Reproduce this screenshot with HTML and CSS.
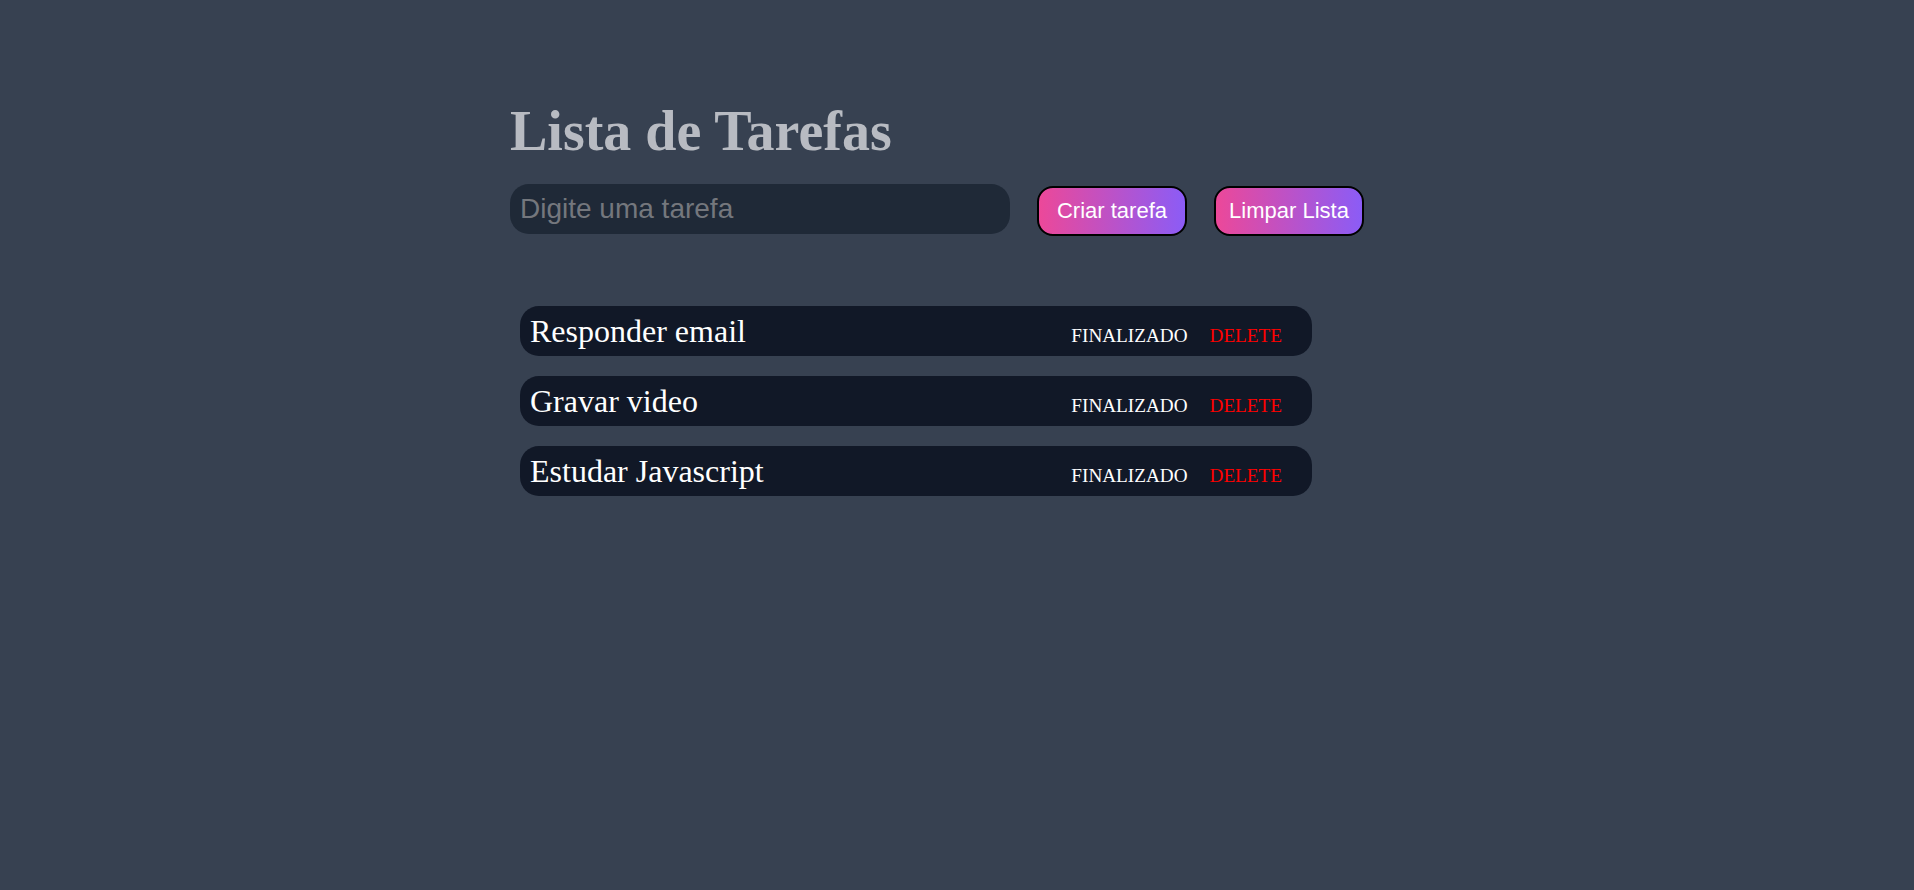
FILE: index.html
```html
<!DOCTYPE html>
<html lang="pt-BR">
<head>
<meta charset="UTF-8">
<title>Lista de Tarefas</title>
<link rel="stylesheet" href="styles.css">
</head>
<body>
<main class="container">
  <h1 class="title">Lista de Tarefas</h1>
  <div class="form-row">
    <input class="task-input" type="text" placeholder="Digite uma tarefa">
    <button class="btn">Criar tarefa</button>
    <button class="btn">Limpar Lista</button>
  </div>
  <ul class="task-list">
    <li class="task">
      <span class="task-name">Responder email</span>
      <div class="task-actions">
        <button class="action done">FINALIZADO</button>
        <button class="action delete">DELETE</button>
      </div>
    </li>
    <li class="task">
      <span class="task-name">Gravar video</span>
      <div class="task-actions">
        <button class="action done">FINALIZADO</button>
        <button class="action delete">DELETE</button>
      </div>
    </li>
    <li class="task">
      <span class="task-name">Estudar Javascript</span>
      <div class="task-actions">
        <button class="action done">FINALIZADO</button>
        <button class="action delete">DELETE</button>
      </div>
    </li>
  </ul>
</main>
</body>
</html>
```
FILE: styles.css
```css
* { box-sizing: border-box; }

html, body {
  margin: 0;
  padding: 0;
}

body {
  background: #374151;
  min-height: 890px;
  font-family: "Liberation Serif", "Times New Roman", serif;
}

.container {
  width: 894px;
  margin: 0 auto;
  padding-top: 100px;
}

.title {
  margin: 0;
  font-family: "Liberation Serif", "Times New Roman", serif;
  font-weight: bold;
  font-size: 56px;
  line-height: 62px;
  color: #b8bbc2;
}

.form-row {
  display: flex;
  align-items: flex-start;
  gap: 27px;
  margin-top: 22px;
}

.task-input {
  width: 500px;
  height: 50px;
  border: none;
  outline: none;
  border-radius: 19px;
  background: #1f2937;
  padding: 0 10px;
  font-family: "Liberation Sans", Arial, sans-serif;
  font-size: 28px;
  color: #e5e7eb;
}

.task-input::placeholder {
  color: #74777d;
}

.btn {
  width: 150px;
  height: 50px;
  margin-top: 2px;
  border: 2px solid #000;
  border-radius: 16px;
  background: linear-gradient(to right, #ec4899, #8b5cf6);
  color: #fff;
  font-family: "Liberation Sans", Arial, sans-serif;
  font-size: 22px;
  padding: 0;
  cursor: pointer;
}

.task-list {
  list-style: none;
  margin: 70px 0 0 10px;
  padding: 0;
  width: 792px;
  display: flex;
  flex-direction: column;
  gap: 20px;
}

.task {
  height: 50px;
  background: #111827;
  border-radius: 19px;
  display: flex;
  align-items: baseline;
  justify-content: space-between;
  padding: 7px 30px 0 10px;
}

.task-name {
  font-size: 32px;
  color: #fff;
}

.task-actions {
  display: flex;
  align-items: baseline;
  gap: 22px;
}

.action {
  background: none;
  border: none;
  padding: 0;
  font-family: "Liberation Serif", "Times New Roman", serif;
  font-size: 19.2px;
  cursor: pointer;
}

.action.done { color: #ffffff; }
.action.delete { color: #ff0000; }
```
